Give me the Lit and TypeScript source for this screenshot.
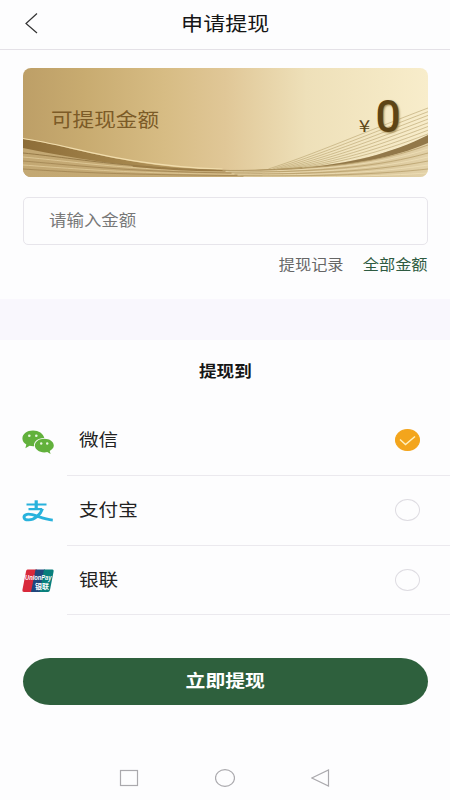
import { LitElement, html, css, svg } from "lit";
import { customElement, state } from "lit/decorators.js";
import { classMap } from "lit/directives/class-map.js";

const wechat = svg`
  <path fill="#62b13c" d="M11 1.500C5 1.500 .4 5 .4 9.500c0 2.600 1.500 4.600 3.900 5.900L3.400 19.200l4.200-2.400c1 .3 2.200.4 3.600.4h1C11.300 12.800 15.700 9 22.300 9.100 21.300 4.600 16.700 1.500 11 1.500z"/>
  <path fill="#62b13c" d="M22.300 9.800c-5.300 0-9.400 2.900-9.400 6.800s4.100 6.800 9.400 6.800c1.100 0 2.100-.1 3-.4l3.300 2-.9-3.100c2.400-1.200 4.100-3 4.100-5.300 0-3.900-4.200-6.800-9.500-6.800z"/>
  <g fill="#e9f6e0"><circle cx="7.300" cy="6.700" r="1.300"/><circle cx="14.300" cy="6.700" r="1.300"/><circle cx="19.200" cy="14.500" r="1.200"/><circle cx="25.200" cy="14.500" r="1.200"/></g>`;

const alipay = svg`
  <g fill="none" stroke="#28b2dc" stroke-linecap="butt">
    <path stroke-width="2.200" d="M4.500 6.500H24.500M6.500 11.100H20"/>
    <path stroke-width="3.200" d="M14.200 2.300V11"/>
    <path stroke-width="2.900" d="M20.500 10.700C18.500 16.700 12.500 22.200 6.200 21.900 1 21.700 .6 17.400 5 16.300 11 14.900 19 21.200 30.800 22.100"/>
  </g>`;

const unionpay = svg`
  <path fill="#d8293b" d="M5.500 1.500H15L10.500 24H2Q0 24 .4 22L4 3.500Q4.300 1.500 5.500 1.500z"/>
  <path fill="#20477c" d="M13.500 1.500H23L18.500 24H9z"/>
  <path fill="#087f7c" d="M22 1.500H30.500Q32 1.500 31.600 3.500L28 22Q27.600 24 26 24H17.500z"/>
  <text class="brand" x="3" y="12.300" textLength="26.500" lengthAdjust="spacingAndGlyphs">UnionPay</text>
  <text class="brand-cn" x="13" y="20.700" textLength="14" lengthAdjust="spacingAndGlyphs">银联</text>`;

const methods = [
  { id: "wechat", name: "微信", icon: wechat },
  { id: "alipay", name: "支付宝", icon: alipay },
  { id: "unionpay", name: "银联", icon: unionpay },
];

@customElement("balance-card")
class BalanceCard extends LitElement {
  static styles = css`
    :host { display: block; height: 109px; }
    .card { display: grid; height: 109px; border-radius: 8px; overflow: hidden; }
    .art, .row { grid-area: 1 / 1; }
    .art { width: 100%; height: 109px; display: block; }
    .row { display: flex; justify-content: space-between; align-items: center; padding: 0 27px 7px 28px; z-index: 1; }
    .label { font-size: 19px; color: #7c5b27; transform: scaleX(1.137); transform-origin: left; }
    .amount { display: flex; align-items: baseline; color: #5d4416; padding-bottom: 2px; }
    .sign { font: 400 16.500px "Noto Sans CJK SC", sans-serif; transform: scaleX(1.25); margin-right: 7px; }
    .value { font: 500 43.500px/44px Roboto, sans-serif; transform: scaleX(1.02); transform-origin: right; text-shadow: 1px 1px 2px #a18a54; }
  `;
  render() {
    const fan = [0, 1, 2, 3, 4, 5, 6, 7];
    const low = [0, 1, 2, 3, 4];
    return html`<div class="card">
      <svg class="art" viewBox="0 0 406 109" preserveAspectRatio="none">
        <defs>
          <linearGradient id="gold"><stop offset="0" stop-color="#bd9f67"/><stop offset=".15" stop-color="#c8ab70"/><stop offset=".35" stop-color="#d7bc84"/><stop offset=".5" stop-color="#e0c797"/><stop offset=".7" stop-color="#eee0b9"/><stop offset="1" stop-color="#f8edcb"/></linearGradient>
          <linearGradient id="base"><stop offset="0" stop-color="#c3a873"/><stop offset=".5" stop-color="#c6ab76"/><stop offset="1" stop-color="#e2d1a8"/></linearGradient>
          <linearGradient id="band"><stop offset="0" stop-color="#8d6d38"/><stop offset=".5" stop-color="#a3844b"/><stop offset="1" stop-color="#c8aa70"/></linearGradient>
        </defs>
        <rect width="406" height="109" fill="url(#gold)"/>
        <path fill="url(#base)" d="M0 72C55 80 100 99 200 102C290 103 350 94 406 68V109H0z"/>
        <path fill="url(#band)" d="M0 71C50 78 100 99 200 102C120 102 60 92 0 80z"/>
        <path fill="none" stroke="#f1ddad" stroke-width="1.200" d="M0 70.500C50 77.500 100 98 200 101"/>
        ${low.map((i) => svg`<path fill="none" stroke=${i % 2 ? "#ead6a6" : "#977a48"} stroke-width="1" opacity=${i === 0 ? "1" : ".65"} d="M0 ${85 + i * 4}C60 ${91 + i * 3.500} 110 ${102 + i * 1.200} 240 ${103 + i * 1.200}"/>`)}
        <path fill="none" stroke="#9b7b45" stroke-width="1.300" d="M110 98C170 104 230 104 280 100"/>
        ${fan.map((i) => svg`<path fill="none" stroke="#b7a16d" stroke-width=".8" opacity=".75" d="M${246 + i * 4} 101C${290 + i * 4} ${87 + i} ${340 + i * 2} ${65 + i * 3} 406 ${40 + i * 3.700}"/>`)}
        <path fill="#927849" d="M270 101C330 96 370 85 406 67V75C370 90 335 97 270 101z"/>
        ${fan.map((i) => svg`<path fill="none" stroke=${i % 2 ? "#efe0b8" : "#b8a06c"} stroke-width="1" opacity=".8" d="M${200 + i * 3} ${102.500 + i * 0.900}C300 ${102.500 + i} 360 ${94 + i * 2} 406 ${77 + i * 4}"/>`)}
      </svg>
      <div class="row"><span class="label">可提现金额</span><span class="amount"><span class="sign">¥</span><span class="value">0</span></span></div>
    </div>`;
  }
}

@customElement("app-root")
class AppRoot extends LitElement {
  @state() selected = "wechat";

  static styles = css`
    :host { display: flex; flex-direction: column; height: 800px; width: 450px; overflow: hidden; background: #fdfdfe; color: #222; font-family: "Noto Sans CJK SC", sans-serif; }
    * { box-sizing: border-box; }
    .wide { display: inline-block; transform: scaleX(1.125); white-space: nowrap; }
    .left { transform-origin: left; }
    .right { transform-origin: right; }
    header { height: 50px; border-bottom: 1px solid #e4e1e7; display: grid; grid-template-columns: 60px 1fr 60px; align-items: center; padding-bottom: 3px; flex: none; }
    .back { width: 14px; height: 22px; margin-left: 25px; }
    h1 { margin: 0; font-size: 19.600px; font-weight: 400; text-align: center; color: #161616; line-height: 28px; }
    .top { padding: 17.500px 22.500px 0; height: 249px; flex: none; }
    .field { height: 48px; margin-top: 20.500px; border: 1.500px solid #e7e5eb; border-radius: 5px; display: flex; align-items: center; padding: 0 25px 4px; font-size: 15.500px; color: #777; }
    .links { display: flex; justify-content: flex-end; gap: 26px; margin-top: 7px; font-size: 14.400px; line-height: 24px; color: #666; }
    .all { color: #2e5b41; }
    .strip { height: 41px; background: #f9f7fd; flex: none; }
    h2 { margin: 0; height: 66px; line-height: 61px; text-align: center; font-size: 15.600px; font-weight: 700; color: #161616; flex: none; }
    .option { display: flex; height: 69.800px; padding-left: 22px; flex: none; }
    .icon { width: 32px; height: 26px; margin-top: 22.500px; margin-right: 13px; flex: none; overflow: visible; }
    .body { flex: 1; display: flex; justify-content: space-between; align-items: center; padding: 0 30px 0 12px; border-bottom: 1.500px solid #ebe9ee; font-size: 17.400px; }
    .name { margin-top: -3px; }
    .radio { width: 25px; height: 22px; border: 1.500px solid #dedce2; border-radius: 50%; display: flex; align-items: center; justify-content: center; }
    .on { background: #f3a51c; border-color: #f3a51c; }
    .tick { width: 17px; height: 11px; }
    .submit { flex: none; height: 47px; margin: 43px 22.500px 0; border: 0; border-radius: 27px / 23.500px; background: #2e603d; color: #fff; font: 700 17.600px "Noto Sans CJK SC", sans-serif; padding: 0 0 4px; }
    nav { display: flex; justify-content: center; gap: 76px; margin-top: 62px; }
    nav svg { width: 20px; height: 22px; }
    .brand { font: italic 700 6.500px/1 "Liberation Sans", sans-serif; fill: #fff; }
    .brand-cn { font: 700 6.500px/1 "Noto Sans CJK SC", sans-serif; fill: #fff; }
  `;

  render() {
    return html`
      <header>
        <svg class="back" viewBox="0 0 14 22" fill="none" stroke="#333" stroke-width="1.200"><path d="M12 1.500L1 11.500L12 21"/></svg>
        <h1><span class="wide">申请提现</span></h1>
      </header>
      <section class="top">
        <balance-card></balance-card>
        <div class="field"><span class="wide left">请输入金额</span></div>
        <div class="links"><span class="wide right">提现记录</span><span class="wide right all">全部金额</span></div>
      </section>
      <div class="strip"></div>
      <h2><span class="wide">提现到</span></h2>
      ${methods.map((m) => {
        const on = m.id === this.selected;
        return html`<div class="option" @click=${() => (this.selected = m.id)}>
          <svg class="icon" viewBox="0 0 32 26">${m.icon}</svg>
          <div class="body">
            <span class="wide left name">${m.name}</span>
            <span class=${classMap({ radio: true, on })}>
              ${on ? html`<svg class="tick" viewBox="0 0 17 11" fill="none" stroke="#fff0bd" stroke-width="1.500"><path d="M1 4.500L6.500 9.500L16 1.500"/></svg>` : ""}
            </span>
          </div>
        </div>`;
      })}
      <button class="submit"><span class="wide">立即提现</span></button>
      <nav>
        <svg viewBox="0 0 20 22" fill="none" stroke="#aaa9ad" stroke-width="1.200"><rect x="1.500" y="3.500" width="17" height="15"/></svg>
        <svg viewBox="0 0 20 22" fill="none" stroke="#aaa9ad" stroke-width="1.200"><ellipse cx="10" cy="11" rx="9.500" ry="8.300"/></svg>
        <svg viewBox="0 0 20 22" fill="none" stroke="#aaa9ad" stroke-width="1.200"><path d="M17.500 3V19L.800 11z"/></svg>
      </nav>
    `;
  }
}
